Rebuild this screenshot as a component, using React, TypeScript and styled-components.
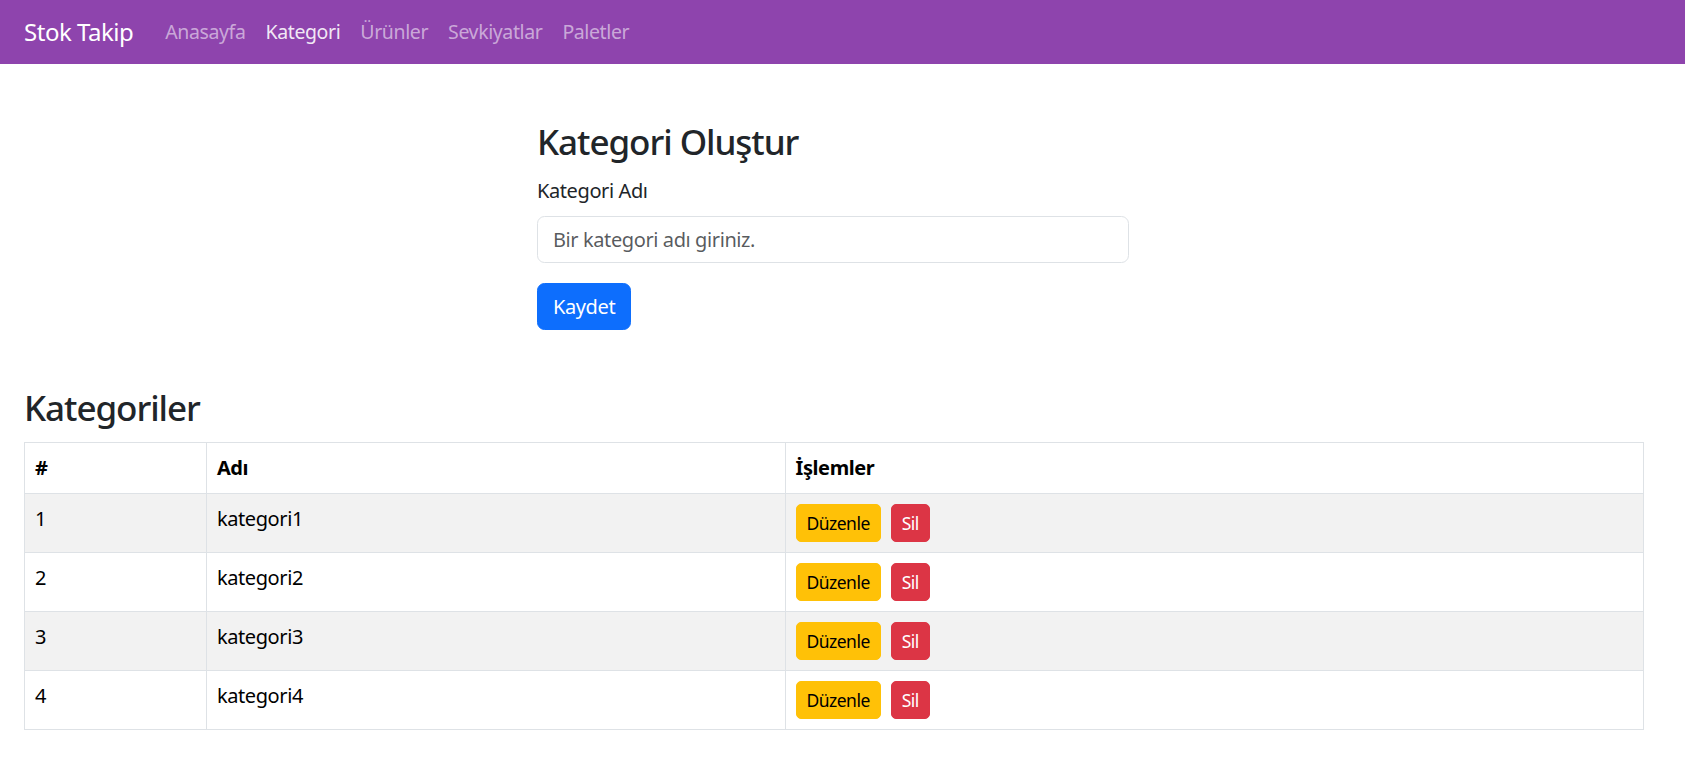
import React from "react";
import styled, { createGlobalStyle } from "styled-components";

const GlobalStyle = createGlobalStyle`
  *, *::before, *::after { box-sizing: border-box; }
  html, body { margin: 0; padding: 0; background: #fff; }
  body {
    font-family: "Noto Sans", "Open Sans", sans-serif;
    font-size: 20px;
    line-height: 1.5;
    color: #212529;
    letter-spacing: -0.02em;
  }
`;

const Navbar = styled.nav`
  display: flex;
  align-items: center;
  height: 64px;
  padding: 0 24px;
  background: #8e44ad;
`;

const Brand = styled.a`
  font-size: 24px;
  line-height: 1.5;
  letter-spacing: -0.02em;
  color: #fff;
  text-decoration: none;
  margin-right: 22px;
`;

const NavList = styled.div`
  display: flex;
  align-items: center;
`;

const NavLink = styled.a<{ $active?: boolean }>`
  padding: 0 10px;
  font-size: 19.5px;
  line-height: 1.5;
  letter-spacing: -0.02em;
  text-decoration: none;
  color: ${(p) => (p.$active ? "rgba(255,255,255,0.9)" : "rgba(255,255,255,0.55)")};
`;

const FormSection = styled.section`
  display: flex;
  justify-content: center;
  padding: 54px 19px 0 0;
`;

const FormCard = styled.form`
  display: flex;
  flex-direction: column;
  align-items: flex-start;
  width: 592px;
`;

const Heading = styled.h2`
  margin: 0 0 10px;
  font-size: 35px;
  font-weight: 500;
  line-height: 48px;
  letter-spacing: -0.03em;
  color: #212529;
`;

const Label = styled.label`
  display: block;
  margin-bottom: 10px;
  font-size: 20px;
  line-height: 1.5;
`;

const Input = styled.input`
  display: block;
  width: 100%;
  height: 47px;
  padding: 7.5px 15px;
  font: inherit;
  letter-spacing: inherit;
  color: #212529;
  background: #fff;
  border: 1px solid #dee2e6;
  border-radius: 7.5px;
  outline: none;
  &::placeholder { color: rgba(33, 37, 41, 0.75); }
`;

const PrimaryButton = styled.button`
  margin-top: 20px;
  height: 47px;
  padding: 7.5px 15px;
  font: inherit;
  letter-spacing: inherit;
  color: #fff;
  background: #0d6efd;
  border: 1px solid #0d6efd;
  border-radius: 7.5px;
`;

const ListSection = styled.section`
  padding: 54px 41px 0 24px;
`;

const Table = styled.table`
  width: 100%;
  border-collapse: collapse;
  color: #000;
  vertical-align: top;
  border: 1px solid #dee2e6;
`;

const Col = styled.col<{ $w: number }>`
  width: ${(p) => p.$w}px;
`;

const Th = styled.th`
  padding: 10px;
  text-align: left;
  font-weight: 700;
  line-height: 30px;
  border: 1px solid #dee2e6;
`;

const Tr = styled.tr<{ $striped: boolean }>`
  background: ${(p) => (p.$striped ? "#f2f2f2" : "#fff")};
`;

const Td = styled.td`
  padding: 10px;
  line-height: 30px;
  border: 1px solid #dee2e6;
  vertical-align: top;
`;

const Actions = styled.div`
  display: flex;
  gap: 10px;
`;

const SmallButton = styled.button<{ $variant: "warning" | "danger" }>`
  height: 38px;
  padding: 5px 10px;
  font-family: inherit;
  font-size: 17.5px;
  line-height: 1.5;
  letter-spacing: -0.03em;
  border-radius: 5px;
  border: 1px solid ${(p) => (p.$variant === "warning" ? "#ffc107" : "#dc3545")};
  background: ${(p) => (p.$variant === "warning" ? "#ffc107" : "#dc3545")};
  color: ${(p) => (p.$variant === "warning" ? "#000" : "#fff")};
`;

const categories = [
  { id: 1, name: "kategori1" },
  { id: 2, name: "kategori2" },
  { id: 3, name: "kategori3" },
  { id: 4, name: "kategori4" },
];

export default function App() {
  return (
    <>
      <GlobalStyle />
      <Navbar>
        <Brand href="#">Stok Takip</Brand>
        <NavList>
          <NavLink href="#">Anasayfa</NavLink>
          <NavLink href="#" $active>Kategori</NavLink>
          <NavLink href="#">Ürünler</NavLink>
          <NavLink href="#">Sevkiyatlar</NavLink>
          <NavLink href="#">Paletler</NavLink>
        </NavList>
      </Navbar>

      <FormSection>
        <FormCard onSubmit={(e) => e.preventDefault()}>
          <Heading>Kategori Oluştur</Heading>
          <Label htmlFor="cat">Kategori Adı</Label>
          <Input id="cat" placeholder="Bir kategori adı giriniz." />
          <PrimaryButton type="submit">Kaydet</PrimaryButton>
        </FormCard>
      </FormSection>

      <ListSection>
        <Heading>Kategoriler</Heading>
        <Table>
          <colgroup>
            <Col $w={182} />
            <Col $w={579} />
            <Col $w={859} />
          </colgroup>
          <thead>
            <tr>
              <Th>#</Th>
              <Th>Adı</Th>
              <Th>İşlemler</Th>
            </tr>
          </thead>
          <tbody>
            {categories.map((c, i) => (
              <Tr key={c.id} $striped={i % 2 === 0}>
                <Td>{c.id}</Td>
                <Td>{c.name}</Td>
                <Td>
                  <Actions>
                    <SmallButton $variant="warning">Düzenle</SmallButton>
                    <SmallButton $variant="danger">Sil</SmallButton>
                  </Actions>
                </Td>
              </Tr>
            ))}
          </tbody>
        </Table>
      </ListSection>
    </>
  );
}
